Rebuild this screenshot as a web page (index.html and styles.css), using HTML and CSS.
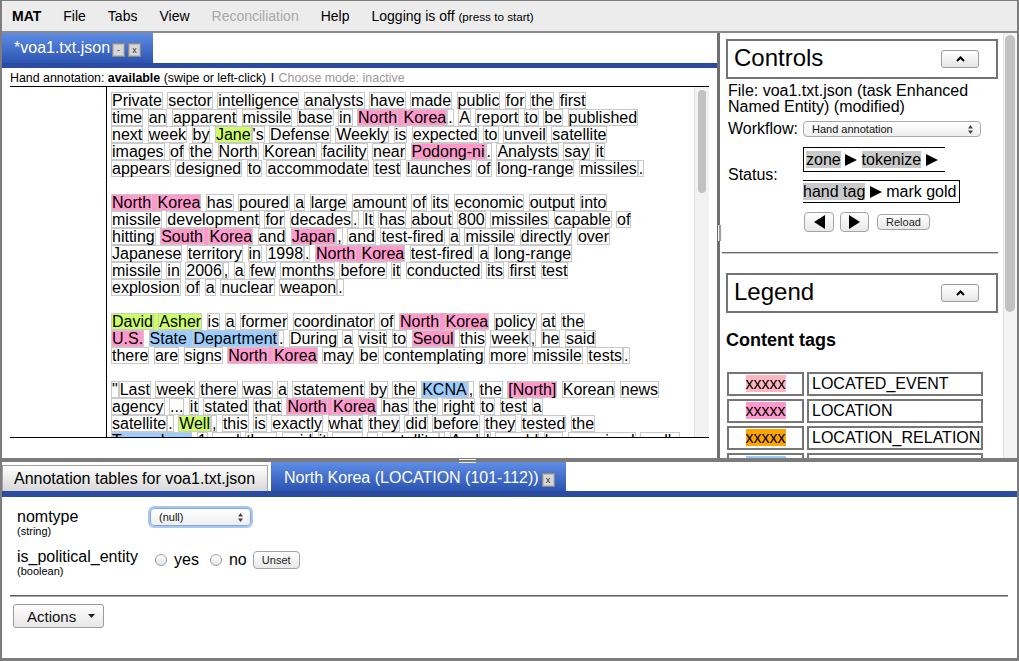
FILE: index.html
```html
<!DOCTYPE html>
<html lang="en">
<head>
<meta charset="utf-8">
<title>MAT</title>
<link rel="stylesheet" href="styles.css">
</head>
<body>
<div class="app">
  <nav class="menubar">
    <span class="mi brand">MAT</span>
    <span class="mi">File</span>
    <span class="mi">Tabs</span>
    <span class="mi">View</span>
    <span class="mi disabled">Reconciliation</span>
    <span class="mi">Help</span>
    <span class="mi">Logging is off <small>(press to start)</small></span>
  </nav>

  <div class="top">
    <section class="docpane">
      <div class="doctabs">
        <div class="tab active doctab">*voa1.txt.json<span class="tbtn first">-</span><span class="tbtn">x</span></div>
      </div>
      <div class="bluebar"></div>
      <div class="modeline">Hand annotation: <b>available</b> (swipe or left-click) <span class="pipe">I</span> <span class="muted">Choose mode: inactive</span></div>
      <div class="textarea">
        <div class="gutter"></div>
        <div class="doc">
<p>
<span class="w">Private</span> <span class="w">sector</span> <span class="w">intelligence</span> <span class="w">analysts</span> <span class="w">have</span> <span class="w">made</span> <span class="w">public</span> <span class="w">for</span> <span class="w">the</span> <span class="w">first</span><br>
<span class="w">time</span> <span class="w">an</span> <span class="w">apparent</span> <span class="w">missile</span> <span class="w">base</span> <span class="w">in</span> <span class="loc"><span class="w">North</span> <span class="w">Korea</span></span><span class="w">.</span> <span class="w">A</span> <span class="w">report</span> <span class="w">to</span> <span class="w">be</span> <span class="w">published</span><br>
<span class="w">next</span> <span class="w">week</span> <span class="w">by</span> <span class="per"><span class="w">Jane</span></span><span class="w">'s</span> <span class="w">Defense</span> <span class="w">Weekly</span> <span class="w">is</span> <span class="w">expected</span> <span class="w">to</span> <span class="w">unveil</span> <span class="w">satellite</span><br>
<span class="w">images</span> <span class="w">of</span> <span class="w">the</span> <span class="w">North</span> <span class="w">Korean</span> <span class="w">facility</span> <span class="w">near</span> <span class="loc"><span class="w">Podong-ni</span></span><span class="w">.</span> <span class="w">Analysts</span> <span class="w">say</span> <span class="w">it</span><br>
<span class="w">appears</span> <span class="w">designed</span> <span class="w">to</span> <span class="w">accommodate</span> <span class="w">test</span> <span class="w">launches</span> <span class="w">of</span> <span class="w">long-range</span> <span class="w">missiles</span><span class="w">.</span>
</p>
<p>
<span class="loc"><span class="w">North</span> <span class="w">Korea</span></span> <span class="w">has</span> <span class="w">poured</span> <span class="w">a</span> <span class="w">large</span> <span class="w">amount</span> <span class="w">of</span> <span class="w">its</span> <span class="w">economic</span> <span class="w">output</span> <span class="w">into</span><br>
<span class="w">missile</span> <span class="w">development</span> <span class="w">for</span> <span class="w">decades</span><span class="w">.</span> <span class="w">It</span> <span class="w">has</span> <span class="w">about</span> <span class="w">800</span> <span class="w">missiles</span> <span class="w">capable</span> <span class="w">of</span><br>
<span class="w">hitting</span> <span class="loc"><span class="w">South</span> <span class="w">Korea</span></span> <span class="w">and</span> <span class="loc"><span class="w">Japan</span></span><span class="w">,</span> <span class="w">and</span> <span class="w">test-fired</span> <span class="w">a</span> <span class="w">missile</span> <span class="w">directly</span> <span class="w">over</span><br>
<span class="w">Japanese</span> <span class="w">territory</span> <span class="w">in</span> <span class="w">1998</span><span class="w">.</span> <span class="loc"><span class="w">North</span> <span class="w">Korea</span></span> <span class="w">test-fired</span> <span class="w">a</span> <span class="w">long-range</span><br>
<span class="w">missile</span> <span class="w">in</span> <span class="w">2006</span><span class="w">,</span> <span class="w">a</span> <span class="w">few</span> <span class="w">months</span> <span class="w">before</span> <span class="w">it</span> <span class="w">conducted</span> <span class="w">its</span> <span class="w">first</span> <span class="w">test</span><br>
<span class="w">explosion</span> <span class="w">of</span> <span class="w">a</span> <span class="w">nuclear</span> <span class="w">weapon</span><span class="w">.</span>
</p>
<p>
<span class="per"><span class="w">David</span> <span class="w">Asher</span></span> <span class="w">is</span> <span class="w">a</span> <span class="w">former</span> <span class="w">coordinator</span> <span class="w">of</span> <span class="loc"><span class="w">North</span> <span class="w">Korea</span></span> <span class="w">policy</span> <span class="w">at</span> <span class="w">the</span><br>
<span class="loc"><span class="w">U.S.</span></span> <span class="org"><span class="w">State</span> <span class="w">Department</span></span><span class="w">.</span> <span class="w">During</span> <span class="w">a</span> <span class="w">visit</span> <span class="w">to</span> <span class="loc"><span class="w">Seoul</span></span> <span class="w">this</span> <span class="w">week</span><span class="w">,</span> <span class="w">he</span> <span class="w">said</span><br>
<span class="w">there</span> <span class="w">are</span> <span class="w">signs</span> <span class="loc"><span class="w">North</span> <span class="w">Korea</span></span> <span class="w">may</span> <span class="w">be</span> <span class="w">contemplating</span> <span class="w">more</span> <span class="w">missile</span> <span class="w">tests</span><span class="w">.</span>
</p>
<p>
<span class="w">"</span><span class="w">Last</span> <span class="w">week</span> <span class="w">there</span> <span class="w">was</span> <span class="w">a</span> <span class="w">statement</span> <span class="w">by</span> <span class="w">the</span> <span class="org"><span class="w">KCNA</span></span><span class="w">,</span> <span class="w">the</span> <span class="loc"><span class="w">[North]</span></span> <span class="w">Korean</span> <span class="w">news</span><br>
<span class="w">agency</span> <span class="w">...</span> <span class="w">it</span> <span class="w">stated</span> <span class="w">that</span> <span class="loc"><span class="w">North</span> <span class="w">Korea</span></span> <span class="w">has</span> <span class="w">the</span> <span class="w">right</span> <span class="w">to</span> <span class="w">test</span> <span class="w">a</span><br>
<span class="w">satellite</span><span class="w">.</span> <span class="per"><span class="w">Well</span></span><span class="w">,</span> <span class="w">this</span> <span class="w">is</span> <span class="w">exactly</span> <span class="w">what</span> <span class="w">they</span> <span class="w">did</span> <span class="w">before</span> <span class="w">they</span> <span class="w">tested</span> <span class="w">the</span><br>
<span class="org"><span class="w">Taepodong</span></span> <span class="w">1</span> <span class="w">and</span> <span class="w">they</span> <span class="w">said</span> <span class="w">it</span> <span class="w">was</span> <span class="w">a</span> <span class="w">satellite</span><span class="w">.</span> <span class="w">And</span> <span class="w">I</span> <span class="w">would</span> <span class="w">be</span> <span class="w">surprised</span> <span class="w">really</span>
</p>
        </div>
        <div class="vscroll"><div class="thumb"></div></div>
      </div>
    </section>

    <div class="vdivider"><span class="vgrip"></span></div>

    <aside class="sidepane">
      <div class="side">
        <div class="panelhead">
          <h2>Controls</h2>
          <button class="collapse" type="button"><svg width="9" height="6" viewBox="0 0 9 6"><polyline points="1,5 4.5,1.5 8,5" fill="none" stroke="#000" stroke-width="2"/></svg></button>
        </div>
        <div class="fileinfo">File: voa1.txt.json (task Enhanced Named Entity) (modified)</div>
        <div class="crow workflow">
          <span class="clabel">Workflow:</span>
          <div class="popup wfsel"><span>Hand annotation</span><svg width="5" height="9" viewBox="0 0 5 9"><path d="M0 3.5 L2.5 0 L5 3.5Z M0 5.5 L2.5 9 L5 5.5Z" fill="#444"/></svg></div>
        </div>
        <div class="crow status">
          <span class="clabel">Status:</span>
          <div class="steps">
            <div class="step1"><span class="done">zone</span> <svg class="tri" viewBox="0 0 12 12"><path d="M0 0 L12 6 L0 12Z"/></svg> <span class="done">tokenize</span> <svg class="tri" viewBox="0 0 12 12"><path d="M0 0 L12 6 L0 12Z"/></svg></div>
            <div class="step2"><span class="done">hand tag</span> <svg class="tri" viewBox="0 0 12 12"><path d="M0 0 L12 6 L0 12Z"/></svg> mark gold</div>
          </div>
        </div>
        <div class="navrow">
          <button class="mbtn nb" type="button"><svg width="11" height="14" viewBox="0 0 11 14"><path d="M11 0 L0 7 L11 14Z"/></svg></button>
          <button class="mbtn nb nb2" type="button"><svg width="11" height="14" viewBox="0 0 11 14"><path d="M0 0 L11 7 L0 14Z"/></svg></button>
          <button class="mbtn reload" type="button">Reload</button>
        </div>
        <div class="sidesep"></div>
        <div class="panelhead legendhead">
          <h2>Legend</h2>
          <button class="collapse" type="button"><svg width="9" height="6" viewBox="0 0 9 6"><polyline points="1,5 4.5,1.5 8,5" fill="none" stroke="#000" stroke-width="2"/></svg></button>
        </div>
        <h3 class="ctags">Content tags</h3>
        <div class="legend">
          <div class="lcell swatch"><span class="sw ev">xxxxx</span></div><div class="lcell name">LOCATED_EVENT</div>
          <div class="lcell swatch"><span class="sw lc">xxxxx</span></div><div class="lcell name">LOCATION</div>
          <div class="lcell swatch"><span class="sw rel">xxxxx</span></div><div class="lcell name">LOCATION_RELATION</div>
          <div class="lcell swatch"><span class="sw og">xxxxx</span></div><div class="lcell name">ORGANIZATION</div>
        </div>
      </div>
      <div class="vscroll sidescroll"><div class="thumb"></div></div>
    </aside>
  </div>

  <div class="hdivider"><span class="hgrip"></span></div>

  <section class="bottom">
    <div class="btabs">
      <div class="tab inactive">Annotation tables for voa1.txt.json</div>
      <div class="tab active annot">North Korea (LOCATION (101-112))<span class="tbtn">x</span></div>
    </div>
    <div class="bluebar thick"></div>
    <div class="fields">
      <div class="frow">
        <div class="flabel"><div class="fname">nomtype</div><div class="ftype">(string)</div></div>
        <div class="popup nullsel"><span>(null)</span><svg width="5" height="9" viewBox="0 0 5 9"><path d="M0 3.5 L2.5 0 L5 3.5Z M0 5.5 L2.5 9 L5 5.5Z" fill="#444"/></svg></div>
      </div>
      <div class="frow second">
        <div class="flabel"><div class="fname">is_political_entity</div><div class="ftype">(boolean)</div></div>
        <div class="fctrl">
          <span class="radio"></span><span class="rl">yes</span>
          <span class="radio r2"></span><span class="rl">no</span>
          <button class="mbtn unset" type="button">Unset</button>
        </div>
      </div>
    </div>
    <div class="rule"></div>
    <button class="actions" type="button">Actions<svg width="7" height="4" viewBox="0 0 7 4"><path d="M0 0 L7 0 L3.5 4Z" fill="#222"/></svg></button>
  </section>
</div>
</body>
</html>
```

FILE: styles.css
```css
* { box-sizing: border-box; }
html, body { margin: 0; padding: 0; background: #fff; }
body {
  width: 1019px;
  height: 661px;
  overflow: hidden;
  font-family: "Liberation Sans", Arial, Helvetica, sans-serif;
  color: #000;
}
button { font-family: "Liberation Sans", Arial, sans-serif; cursor: default; }

.app {
  width: 1019px;
  height: 661px;
  display: flex;
  flex-direction: column;
  border-style: solid;
  border-color: #7d7d7d;
  border-width: 1px 2px 3px 2px;
  overflow: hidden;
}

/* menu bar */
.menubar {
  flex: none;
  height: 32px;
  display: flex;
  align-items: center;
  gap: 22px;
  padding-left: 10px;
  background: #ececec;
  border-bottom: 2px solid #8b8b8b;
  font-size: 14px;
}
.mi { white-space: nowrap; }
.brand { font-weight: bold; }
.disabled { color: #a8a8a8; }
.mi small { font-size: 11.7px; }

/* top area */
.top { flex: none; height: 425px; display: flex; }

.docpane {
  width: 715px;
  flex: none;
  display: flex;
  flex-direction: column;
  background: #fff;
}
.doctabs { flex: none; height: 30px; display: flex; }
.tab { display: flex; align-items: center; white-space: nowrap; font-size: 16px; }
.tab.active { color: #fff; background: linear-gradient(#5e8de6, #2b53b1); }
.doctab { padding: 0 12px 0 12px; }

.tbtn {
  width: 13px;
  height: 14px;
  margin: 4px 0 0 3px;
  background: #d7d7d7;
  border: 1px solid #8a8a8a;
  box-shadow: inset 0 0 0 1px #bcbcbc;
  color: #333;
  font-size: 9px;
  line-height: 12px;
  text-align: center;
}
.tbtn.first { margin-left: 2px; }

.bluebar { flex: none; height: 5px; background: #2a4b9f; }
.bluebar.thick { height: 6px; }

.modeline {
  flex: none;
  height: 18px;
  padding: 3px 0 0 8px;
  font-size: 12.4px;
  line-height: 15px;
  white-space: nowrap;
}
.pipe { margin: 0 1px; }
.muted { color: #9a9a9a; }

.textarea {
  flex: none;
  width: 699px;
  height: 352px;
  margin-left: 8px;
  border-top: 1px solid #000;
  border-bottom: 1px solid #000;
  display: flex;
}
.gutter { flex: none; width: 97px; border-right: 1px solid #000; }
.doc {
  flex: 1;
  overflow: hidden;
  padding: 5px 0 0 4px;
  font-size: 16px;
  line-height: 17px;
  white-space: nowrap;
}
.doc p { margin: 0 0 17px; }
.w {
  display: inline-block;
  height: 17px;
  line-height: 15px;
  border: 1px solid #c9c9c9;
  vertical-align: baseline;
}
.loc { background: #ff99cc; }
.per { background: #ccff66; }
.org { background: #99ccff; }

.vscroll {
  flex: none;
  width: 15px;
  background: #f2f2f2;
  border-left: 1px solid #e2e2e2;
  padding: 3px 3px 0 3px;
}
.thumb { height: 103px; border-radius: 4px; background: #c2c2c2; }

.vdivider { flex: none; width: 3px; background: #6f6f6f; position: relative; z-index: 2; }
.vgrip {
  position: absolute;
  left: 1px;
  top: 192px;
  width: 4px;
  height: 16px;
  border-left: 1px solid #f2f2f2;
  border-right: 1px solid #f2f2f2;
  background: #a0a0a0;
}

/* side pane */
.sidepane { flex: none; width: 297px; display: flex; background: #fff; }
.side { flex: 1; overflow: hidden; padding: 6px 5px 0 6px; }
.sidescroll { width: 14px; padding: 2px 2px 0 1px; background: #f4f4f4; }
.sidescroll .thumb { width: 10px; height: 277px; border-radius: 5px; }

.panelhead {
  height: 40px;
  border: 2px solid #747474;
  display: flex;
  align-items: center;
  justify-content: space-between;
  padding: 0 17px 2px 6px;
}
.panelhead h2 { margin: 0; font-size: 24px; font-weight: normal; line-height: 28px; }
.collapse {
  width: 38px;
  height: 18px;
  padding: 0;
  border: 1px solid #9b9b9b;
  border-radius: 3px;
  background: linear-gradient(#ffffff, #e6e6e6);
  display: flex;
  align-items: center;
  justify-content: center;
  margin-top: 2px;
}

.fileinfo { margin-top: 4px; padding-left: 2px; font-size: 16px; line-height: 16px; }
.crow { display: flex; align-items: center; padding-left: 2px; font-size: 16px; }
.clabel { flex: none; width: 75px; }
.workflow { margin-top: 6px; height: 16px; }

.popup {
  display: flex;
  align-items: center;
  justify-content: space-between;
  border: 1px solid #a9a9a9;
  border-radius: 4px;
  background: linear-gradient(#ffffff, #eeeeee);
  font-size: 11px;
  color: #111;
  padding: 0 7px 0 8px;
}
.wfsel { width: 178px; height: 16px; }

.status { margin-top: 10px; }
.steps { display: flex; flex-direction: column; align-items: flex-start; }
.step1 {
  height: 25px;
  width: 142px;
  border: 1px solid #000;
  border-right: none;
  padding-left: 2px;
  line-height: 23px;
  white-space: nowrap;
}
.step2 {
  margin-top: 8px;
  height: 23px;
  border: 1px solid #000;
  border-left: none;
  padding-right: 3px;
  line-height: 21px;
  white-space: nowrap;
}
.done { background: #c9c9c9; }
.tri { width: 12px; height: 12px; vertical-align: -1px; }

.navrow { margin-top: 9px; padding-left: 78px; display: flex; align-items: center; }
.mbtn {
  padding: 0;
  border: 1px solid #a4a4a4;
  border-radius: 4px;
  background: linear-gradient(#ffffff, #e8e8e8);
  display: flex;
  align-items: center;
  justify-content: center;
  color: #222;
}
.nb { width: 30px; height: 20px; }
.nb2 { width: 29px; margin-left: 6px; }
.reload { margin-left: 8px; width: 53px; height: 16px; font-size: 11px; }

.sidesep {
  margin: 20px 0 0 -4px;
  height: 2px;
  border-top: 1px solid #6b6b6b;
  border-bottom: 1px solid #c4c4c4;
}
.legendhead { margin-top: 19px; }
.ctags { margin: 17px 0 0; font-size: 18px; line-height: 21px; font-weight: bold; }
.legend {
  margin: 21px 0 0 1px;
  display: grid;
  grid-template-columns: 77px 176px;
  grid-auto-rows: 24px;
  gap: 3px;
}
.lcell {
  border: 2px solid #767676;
  font-size: 16px;
  line-height: 20px;
  white-space: nowrap;
  overflow: hidden;
}
.swatch { text-align: center; }
.name { padding-left: 3px; }
.sw.ev { background: #ffb6c1; }
.sw.lc { background: #ff99cc; }
.sw.rel { background: #ffa500; }
.sw.og { background: #99ccff; }

/* bottom */
.hdivider { flex: none; height: 4px; background: #7b7b7b; position: relative; z-index: 2; }
.hgrip {
  position: absolute;
  left: 457px;
  top: 1px;
  width: 17px;
  height: 4px;
  border-top: 1px solid #f0f0f0;
  border-bottom: 1px solid #f0f0f0;
}
.bottom { flex: 1; display: flex; flex-direction: column; background: #fff; }
.btabs { flex: none; height: 29px; display: flex; align-items: flex-end; }
.btabs .inactive {
  width: 266px;
  height: 26px;
  padding-left: 11px;
  border: 1px solid #a2a2a2;
  border-bottom: none;
  background: linear-gradient(#fefefe, #d8d8d8);
}
.btabs .annot { width: 295px; height: 29px; margin-left: 3px; padding: 3px 0 0 13px; }
.btabs .annot .tbtn { margin: 4px 0 0 3px; }

.fields { padding: 11px 0 0 15px; }
.frow { display: flex; align-items: flex-start; }
.frow.second { margin-top: 10px; }
.flabel { flex: none; width: 133px; }
.fname { font-size: 16px; line-height: 17px; }
.ftype { font-size: 11px; line-height: 13px; }
.nullsel {
  width: 101px;
  height: 18px;
  border-color: #7ea6df;
  box-shadow: 0 0 0 2px #aac7f0;
}
.fctrl { margin-top: 3px; height: 18px; display: flex; align-items: center; font-size: 16px; }
.radio {
  flex: none;
  width: 12px;
  height: 12px;
  margin-left: 5px;
  border-radius: 50%;
  border: 1px solid #9d9d9d;
  background: linear-gradient(#fdfdfd, #e4e4e4);
}
.radio.r2 { margin-left: 11px; }
.rl { margin-left: 7px; }
.unset { margin-left: 6px; width: 47px; height: 18px; font-size: 11px; }

.rule {
  margin: 17px 9px 0 8px;
  height: 2px;
  border-top: 1px solid #5e5e5e;
  border-bottom: 1px solid #a9a9a9;
}
.actions {
  margin: 7px 0 0 11px;
  width: 91px;
  height: 24px;
  padding: 0 0 0 13px;
  border: 1px solid #9b9b9b;
  border-radius: 3px;
  background: linear-gradient(#ffffff, #e6e6e6);
  font-size: 15px;
  color: #111;
  display: flex;
  align-items: center;
}
.actions svg { margin-left: 12px; }
```
